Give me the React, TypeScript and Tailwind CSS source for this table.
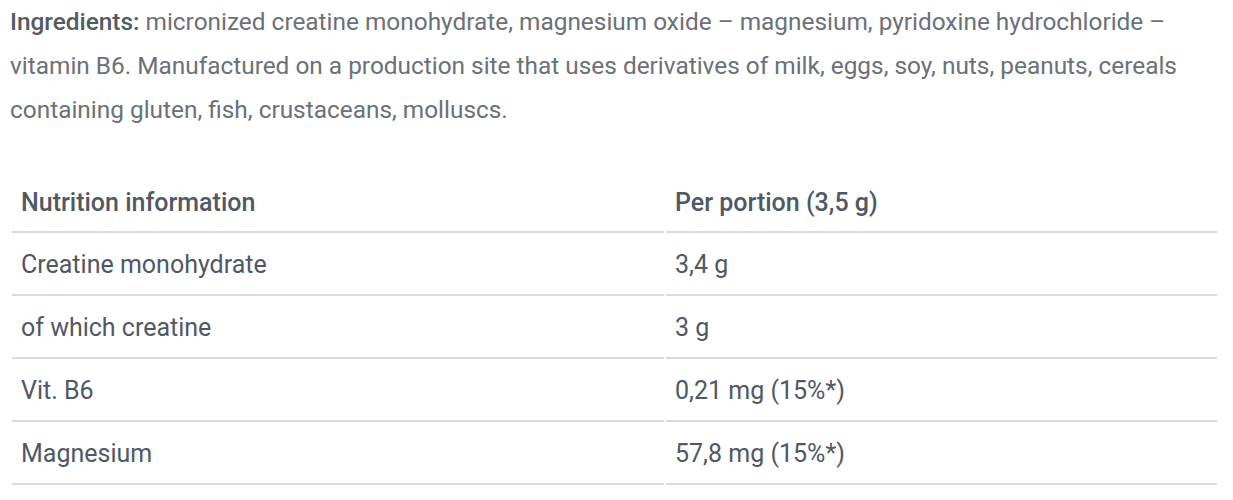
import React from "react";

const rows = [
  ["Creatine monohydrate", "3,4 g"],
  ["of which creatine", "3 g"],
  ["Vit. B6", "0,21 mg (15%*)"],
  ["Magnesium", "57,8 mg (15%*)"],
];

export default function App() {
  return (
    <div className="w-[1233px] h-[500px] bg-white overflow-hidden font-['Roboto',sans-serif]">
      <p className="pl-[10px] pr-[20px] text-[24.4px] leading-[44px] text-[#6b7079]">
        <span className="font-medium text-[#535a64]">Ingredients:</span> micronized creatine monohydrate,
        magnesium oxide – magnesium, pyridoxine hydrochloride – vitamin B6. Manufactured on a production site that
        uses derivatives of milk, eggs, soy, nuts, peanuts, cereals containing gluten, fish, crustaceans, molluscs.
      </p>
      <div className="mt-[38px] ml-[12px] w-[1205px] grid grid-cols-[652px_551px] gap-x-[2px] text-[25px] text-[#4f5865]">
        <div className="h-[63px] flex items-center pl-[9px] pt-[4px] border-b-2 border-[#d9dbde] font-medium">
          Nutrition information
        </div>
        <div className="h-[63px] flex items-center pl-[9px] pt-[4px] border-b-2 border-[#d9dbde] font-medium">
          Per portion (3,5 g)
        </div>
        {rows.map(([a, b]) => (
          <React.Fragment key={a}>
            <div className="h-[63px] flex items-center pl-[9px] pt-[3px] border-b-2 border-[#d9dbde]">{a}</div>
            <div className="h-[63px] flex items-center pl-[9px] pt-[3px] border-b-2 border-[#d9dbde]">{b}</div>
          </React.Fragment>
        ))}
      </div>
    </div>
  );
}
